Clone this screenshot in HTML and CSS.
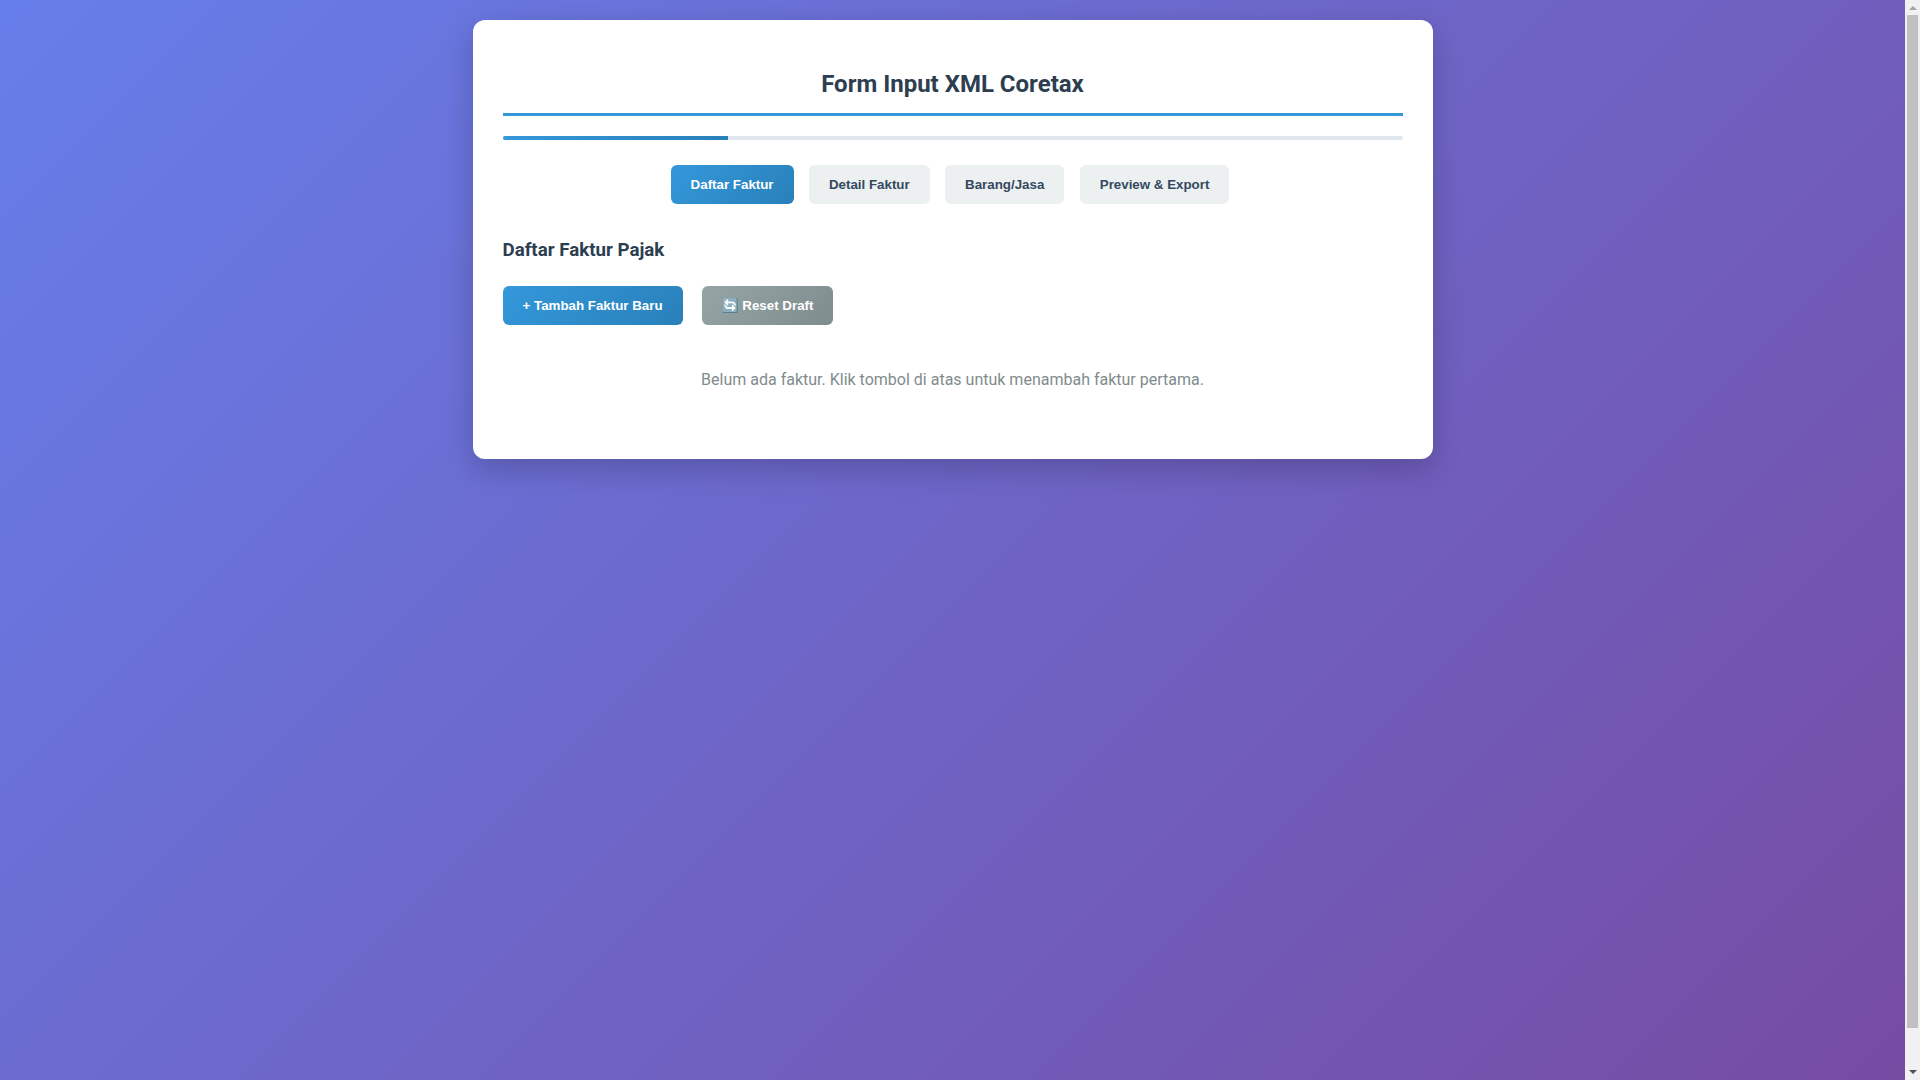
FILE: index.html
```html
<!DOCTYPE html>
<html lang="en">
  <head>
    <meta charset="UTF-8" />
    <meta name="viewport" content="width=device-width, initial-scale=1.0" />
    <title>Form Input XML Coretax</title>
    <link rel="stylesheet" href="styles.css">
  </head>
  <body>
    <div class="container">
      <h1>Form Input XML Coretax</h1>

      <!-- Progress bar -->
      <div class="progress-bar">
        <div class="progress-fill"></div>
      </div>

      <!-- Step navigation -->
      <div class="nav-buttons">
        <button class="nav-btn active">Daftar Faktur</button>
        <button class="nav-btn">Detail Faktur</button>
        <button class="nav-btn">Barang/Jasa</button>
        <button class="nav-btn">Preview &amp; Export</button>
      </div>

      <!-- Daftar faktur -->
      <section class="section">
        <h2>Daftar Faktur Pajak</h2>
        <div class="actions">
          <button class="btn btn-primary">+ Tambah Faktur Baru</button>
          <button class="btn btn-secondary">🔄 Reset Draft</button>
        </div>
        <p class="empty-message">Belum ada faktur. Klik tombol di atas untuk menambah faktur pertama.</p>
      </section>
    </div>

    <!-- Window scrollbar, the headless browser hides the real one -->
    <div class="scrollbar">
      <svg class="scroll-arrow" viewBox="0 0 8 4"><path d="M4 0L8 4H0Z" /></svg>
      <div class="scroll-thumb"></div>
      <svg class="scroll-arrow scroll-arrow-down" viewBox="0 0 8 4"><path d="M0 0H8L4 4Z" /></svg>
    </div>
  </body>
</html>
```

FILE: styles.css
```css
* {
  margin: 0;
  padding: 0;
  box-sizing: border-box;
}

html {
  margin-right: 15px;
}

body {
  font-family: Roboto, sans-serif;
  background: linear-gradient(135deg, #667eea 0%, #764ba2 100%);
  min-height: calc(100vh + 40px);
  padding: 20px;
}

.container {
  max-width: 960px;
  margin: 0 auto;
  background-color: white;
  border-radius: 12px;
  box-shadow: 0 10px 30px rgba(0, 0, 0, 0.2);
  padding: 30px;
}

h1 {
  color: #2c3e50;
  text-align: center;
  font-size: 24px;
  font-weight: 700;
  line-height: 28px;
  padding-top: 20px;
  padding-bottom: 15px;
  border-bottom: 3px solid #3498db;
  margin-bottom: 20px;
}

.progress-bar {
  height: 4px;
  background-color: #e0e6ed;
  border-radius: 2px;
  overflow: hidden;
  margin-bottom: 25px;
}

.progress-fill {
  width: 25%;
  height: 100%;
  background: linear-gradient(135deg, #3498db, #2980b9);
}

.nav-buttons {
  display: flex;
  justify-content: center;
  gap: 15.4px;
  padding-right: 5px;
  margin-bottom: 35px;
}

.nav-btn,
.btn {
  border: none;
  border-radius: 6px;
  padding: 12px 20px;
  font-family: "Liberation Sans", Arial, sans-serif;
  font-size: 13.3333px;
  font-weight: 700;
  cursor: pointer;
}

.nav-btn {
  background-color: #ecf0f1;
  color: #34495e;
}

.nav-btn.active,
.btn-primary {
  background: linear-gradient(135deg, #3498db, #2980b9);
  color: white;
}

h2 {
  color: #2c3e50;
  font-size: 18.72px;
  font-weight: 700;
  line-height: 22px;
  margin-bottom: 25px;
}

.actions {
  display: flex;
  gap: 19px;
  margin-bottom: 45px;
}

.btn-secondary {
  background: linear-gradient(135deg, #95a5a6, #7f8c8d);
  color: white;
}

.empty-message {
  color: #7f8c8d;
  text-align: center;
  font-size: 16px;
  line-height: 19px;
  padding-bottom: 40px;
}

.scrollbar {
  position: fixed;
  top: 0;
  right: 0;
  bottom: 0;
  width: 15px;
  background-color: #f1f1f1;
  display: flex;
  flex-direction: column;
  align-items: center;
}

.scroll-arrow {
  width: 8px;
  height: 4px;
  margin: 6px 0 5px;
  flex-shrink: 0;
  fill: #a3a3a3;
}

.scroll-arrow-down {
  margin: auto 0 6px;
  fill: #505050;
}

.scroll-thumb {
  width: 11px;
  height: 1013px;
  background-color: #c1c1c1;
}
```
